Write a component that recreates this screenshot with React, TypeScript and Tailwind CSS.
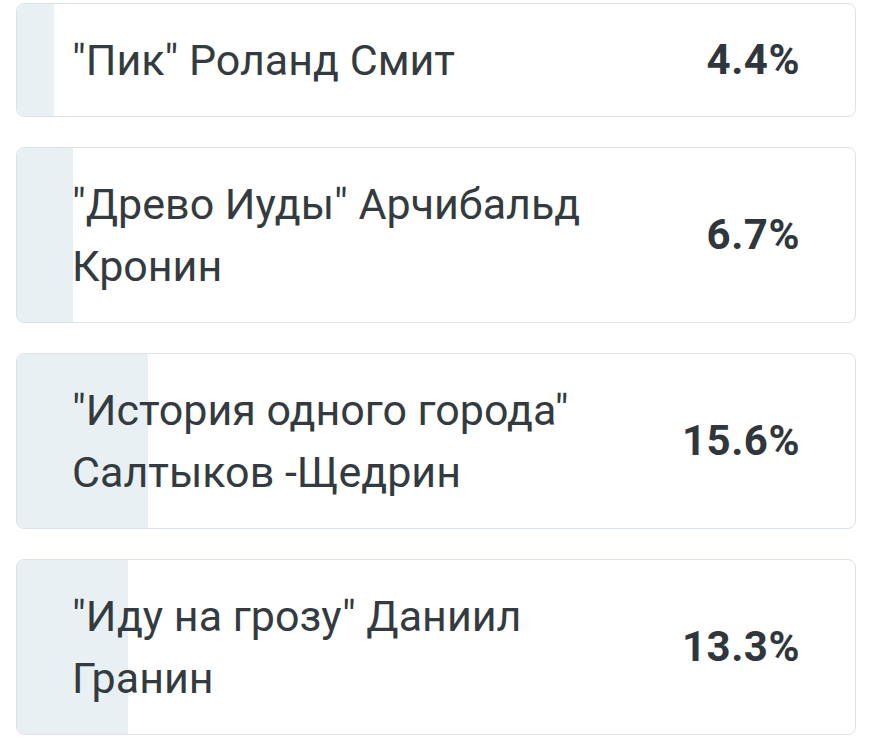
import React from "react";

const items = [
  { text: '"Пик" Роланд Смит', pct: 4.4 },
  { text: '"Древо Иуды" Арчибальд Кронин', pct: 6.7 },
  { text: '"История одного города" Салтыков -Щедрин', pct: 15.6 },
  { text: '"Иду на грозу" Даниил Гранин', pct: 13.3 },
];

export default function App() {
  return (
    <div
      className="w-[882px] h-[742px] bg-white pt-[3px] pl-[16px] pr-[26px] flex flex-col gap-[30px] overflow-hidden"
      style={{ fontFamily: "Roboto, 'Noto Sans', sans-serif" }}
    >
      {items.map((it) => (
        <div
          key={it.text}
          className="relative border border-[#dbe3e8] rounded-[8px] overflow-hidden bg-white"
        >
          <div
            className="absolute left-0 top-0 bottom-0 bg-[#e9f0f3]"
            style={{ width: `${it.pct}%` }}
          />
          <div className="relative flex items-center pl-[55px] pr-[55px] py-[25px]">
            <div className="flex-1 min-w-0 text-[43px] leading-[62px] text-[#343b40]">
              {it.text}
            </div>
            <div className="w-[160px] shrink-0 text-right text-[42px] leading-[62px] font-bold text-[#30373c] tracking-[0.5px]">
              {it.pct}%
            </div>
          </div>
        </div>
      ))}
    </div>
  );
}
